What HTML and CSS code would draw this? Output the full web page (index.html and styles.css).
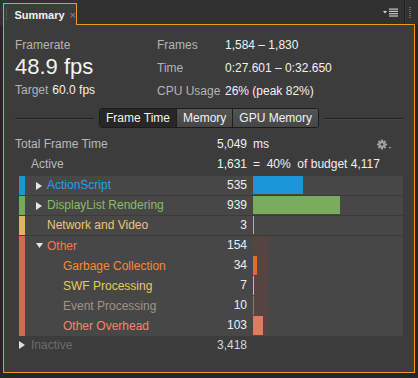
FILE: index.html
```html
<!DOCTYPE html>
<html>
<head>
<meta charset="utf-8">
<link rel="stylesheet" href="styles.css">
</head>
<body>
<div class="win">
  <div class="tabbar">
    <div class="tab">
      <span class="grip"></span>
      <span class="tab-title">Summary</span>
      <span class="tab-x">×</span>
    </div>
    <div class="tabfill">
      <svg class="menu-ic" width="15" height="9" viewBox="0 0 15 9">
        <polygon points="0,3 4,3 2,5.5" fill="#d8d8d8"/>
        <rect x="6" y="0.5" width="9" height="1.2" fill="#c8c8c8"/>
        <rect x="6" y="2.8" width="9" height="1.2" fill="#c8c8c8"/>
        <rect x="6" y="5.1" width="9" height="1.2" fill="#c8c8c8"/>
        <rect x="6" y="7.4" width="9" height="1.2" fill="#c8c8c8"/>
      </svg>
      <span class="divider"></span>
      <span class="grip grip-r"></span>
    </div>
  </div>
  <div class="panel">
    <div class="stats">
      <div class="fr">
        <div class="lbl fr-lbl">Framerate</div>
        <div class="big">48.9 fps</div>
        <div class="target"><span class="lbl">Target</span><span class="val">60.0 fps</span></div>
      </div>
      <div class="info">
        <span class="lbl">Frames</span><span class="val">1,584 – 1,830</span>
        <span class="lbl">Time</span><span class="val">0:27.601 – 0:32.650</span>
        <span class="lbl">CPU Usage</span><span class="val">26% (peak 82%)</span>
      </div>
    </div>
    <div class="seg-row">
      <span class="rule"></span>
      <div class="seg">
        <span class="seg-btn sel">Frame Time</span>
        <span class="seg-btn">Memory</span>
        <span class="seg-btn">GPU Memory</span>
      </div>
      <span class="rule"></span>
    </div>
    <div class="table">
      <div class="hrow">
        <span class="hlbl">Total Frame Time</span>
        <span class="hval">5,049</span>
        <span class="hext"><span>ms</span>
          <svg class="gear" width="16" height="11" viewBox="0 0 16 11">
            <g fill="#a0a0a0">
              <rect x="4" y="0.5" width="2" height="10"/>
              <rect x="0" y="4.5" width="10" height="2"/>
              <rect x="4" y="0.5" width="2" height="10" transform="rotate(45 5 5.5)"/>
              <rect x="4" y="0.5" width="2" height="10" transform="rotate(-45 5 5.5)"/>
              <circle cx="5" cy="5.5" r="3.4"/>
            </g>
            <circle cx="5" cy="5.5" r="1.3" fill="#3c3c3c"/>
            <polygon points="11.5,8 14.5,8 13,9.6" fill="#a0a0a0"/>
          </svg>
        </span>
      </div>
      <div class="hrow">
        <span class="hlbl ind">Active</span>
        <span class="hval">1,631</span>
        <span class="hext"><span>=&nbsp;&nbsp;40%&nbsp;&nbsp;of budget 4,117</span></span>
      </div>

      <div class="rows">
        <div class="row sep">
          <span class="sw c-as"></span>
          <span class="name t-as"><svg class="tri" width="11" height="8" viewBox="0 0 11 8"><polygon points="0,0 6,4 0,8" fill="#e6e6e6"/></svg>ActionScript</span>
          <span class="val">535</span>
          <span class="chart"><span class="bar b-as" style="width:50px"></span></span>
        </div>
        <div class="row sep">
          <span class="sw c-dl"></span>
          <span class="name t-dl"><svg class="tri" width="11" height="8" viewBox="0 0 11 8"><polygon points="0,0 6,4 0,8" fill="#e6e6e6"/></svg>DisplayList Rendering</span>
          <span class="val">939</span>
          <span class="chart"><span class="bar b-dl" style="width:87px"></span></span>
        </div>
        <div class="row sep">
          <span class="sw c-nv"></span>
          <span class="name t-nv"><span class="tri-sp"></span>Network and Video</span>
          <span class="val">3</span>
          <span class="chart"><span class="bar b-nv" style="width:1px"></span></span>
        </div>
        <div class="group">
          <span class="sw c-ot gsw"></span>
          <div class="gbody">
            <div class="row">
              <span class="name t-ot"><svg class="tri" width="11" height="6" viewBox="0 0 11 6"><polygon points="0,0 7,0 3.5,5" fill="#e6e6e6"/></svg>Other</span>
              <span class="val">154</span>
              <span class="chart"><span class="bar b-ot" style="width:15px"></span></span>
            </div>
            <div class="row">
              <span class="name sub t-gc">Garbage Collection</span>
              <span class="val">34</span>
              <span class="chart gchart"><span class="bar b-gc" style="width:4px"></span></span>
            </div>
            <div class="row">
              <span class="name sub t-swf">SWF Processing</span>
              <span class="val">7</span>
              <span class="chart gchart"><span class="bar b-swf" style="width:1px"></span></span>
            </div>
            <div class="row">
              <span class="name sub t-ev">Event Processing</span>
              <span class="val">10</span>
              <span class="chart gchart"><span class="bar b-ev" style="width:1px"></span></span>
            </div>
            <div class="row">
              <span class="name sub t-oo">Other Overhead</span>
              <span class="val">103</span>
              <span class="chart gchart"><span class="bar b-oo" style="width:10px"></span></span>
            </div>
          </div>
        </div>
      </div>

      <div class="hrow inactive">
        <span class="hlbl"><svg class="tri" width="12" height="8" viewBox="0 0 12 8"><polygon points="0,0 6,4 0,8" fill="#e0e0e0"/></svg>Inactive</span>
        <span class="hval">3,418</span>
        <span class="hext"></span>
      </div>
    </div>
  </div>
</div>
</body>
</html>
```

FILE: styles.css
```css
* { box-sizing: border-box; }
html, body { margin: 0; padding: 0; }
body {
  background: #262626;
  font-family: "Liberation Sans", Arial, sans-serif;
  font-size: 12px;
  color: #ececec;
  width: 418px;
  height: 378px;
  overflow: hidden;
}
.win { width: 418px; height: 378px; background: #262626; }

/* tab bar */
.tabbar {
  height: 25px;
  display: flex;
  padding: 0 3px;
  background: #313131;
}
.tab {
  margin-top: 3px;
  width: 74px;
  height: 22px;
  border: 1px solid #eb9a22;
  border-bottom: none;
  background: #3c3c3c;
  display: flex;
  align-items: center;
}
.grip {
  width: 2px;
  height: 11px;
  background: repeating-linear-gradient(to bottom, #6a6a6a 0 1px, transparent 1px 2px);
}
.tab .grip { margin-left: 2px; margin-top: -1px; }
.tab-title {
  margin-left: 7px;
  font-weight: bold;
  font-size: 11px;
  color: #f2f2f2;
  line-height: 20px;
}
.tab-x {
  margin-left: 5px;
  color: #8a8a8a;
  font-size: 11px;
  line-height: 20px;
}
.tabfill {
  flex: 1;
  border-bottom: 1px solid #eb9a22;
  display: flex;
  justify-content: flex-end;
  align-items: center;
}
.menu-ic { margin-top: 1px; }
.divider {
  align-self: stretch;
  width: 1px;
  margin-left: 6px;
  margin-bottom: 0;
  background: #222;
  box-shadow: 1px 0 0 #3a3a3a;
}
.grip-r { margin-left: 4px; margin-right: 4px; }

/* panel */
.panel {
  margin: 0 3px;
  height: 348px;
  border: 1px solid #eb9a22;
  border-top: none;
  background: #3c3c3c;
  padding: 12px 11px 0 11px;
}
.lbl { color: #b4b4b4; }
.val { color: #f2f2f2; }

.stats { display: flex; }
.fr { width: 142px; display: flex; flex-direction: column; }
.fr-lbl { line-height: 16px; }
.big {
  font-size: 22px;
  line-height: 26px;
  margin-top: 1px;
  color: #f4f4f4;
}
.target { line-height: 16px; margin-top: 2px; }
.target .val { margin-left: 4px; }
.info {
  display: grid;
  grid-template-columns: 68px auto;
  row-gap: 7px;
  line-height: 16px;
  align-content: start;
}

.seg-row {
  margin-top: 9px;
  display: flex;
  align-items: center;
}
.rule {
  flex: 1;
  height: 1px;
  background: #202020;
  box-shadow: 0 1px 0 #444;
}
.seg {
  margin: 0 5px;
  display: flex;
  border: 1px solid #1c1c1c;
  border-radius: 3px;
  overflow: hidden;
  height: 20px;
}
.seg-btn {
  line-height: 18px;
  padding: 0 6px;
  color: #f2f2f2;
  background: linear-gradient(#535353, #474747);
  border-left: 1px solid #1e1e1e;
}
.seg-btn.sel {
  background: #272727;
  border-left: none;
  padding: 0 6px 0 6px;
}

/* table */
.table { margin-top: 6px; }
.hrow {
  display: flex;
  height: 20px;
  line-height: 20px;
}
.hlbl { flex: 1; color: #bababa; display: flex; align-items: center; }
.hlbl.ind { padding-left: 16px; }
.hval { width: 50px; text-align: right; color: #f0f0f0; }
.hext {
  width: 150px;
  margin-left: 6px;
  display: flex;
  justify-content: space-between;
  align-items: center;
  color: #f0f0f0;
}
.gear { margin-right: 10px; margin-top: 1px; }

.rows { margin: 2px 0 0 4px; }
.row {
  display: flex;
  height: 20px;
  line-height: 19px;
  background: #474747;
}
.row.sep { border-bottom: 1px solid #3b3b3b; }
.sw { width: 6px; flex: none; }
.name { flex: 1; padding-left: 11px; display: flex; align-items: center; white-space: nowrap; }
.name.sub { padding-left: 38px; }
.tri { flex: none; }
.tri-sp { width: 11px; flex: none; }
.row .val { width: 50px; text-align: right; color: #f0f0f0; }
.chart { width: 150px; margin-left: 6px; display: flex; align-items: stretch; padding-bottom: 1px; }
.gchart { background: linear-gradient(to right, #564440 15px, transparent 15px); padding-bottom: 1px; }
.bar { display: block; }

.group { display: flex; }
.gsw { align-self: stretch; }
.gbody { flex: 1; }

.c-as { background: #1a95d8; }
.c-dl { background: #78a85a; }
.c-nv { background: #dcb565; }
.c-ot { background: #d6694f; }

.t-as { color: #1ea2e6; }
.t-dl { color: #8cbd62; }
.t-nv { color: #ecc676; }
.t-ot { color: #ef7c50; }
.t-gc { color: #f48a3a; }
.t-swf { color: #e4cd5c; }
.t-ev { color: #a39283; }
.t-oo { color: #ef8a67; }

.b-as { background: #1a95d8; }
.b-dl { background: #7bab5c; }
.b-nv { background: #d4aa55; }
.b-ot { background: #564440; }
.b-gc { background: #e8682a; }
.b-swf { background: #d9c24a; }
.b-ev { background: #8a7766; }
.b-oo { background: #e07b5e; }

.inactive { margin-top: 0; height: 18px; line-height: 18px; }
.inactive .hlbl { color: #6c6c6c; padding-left: 4px; }
.inactive .hval { color: #d8d8d8; }
```
